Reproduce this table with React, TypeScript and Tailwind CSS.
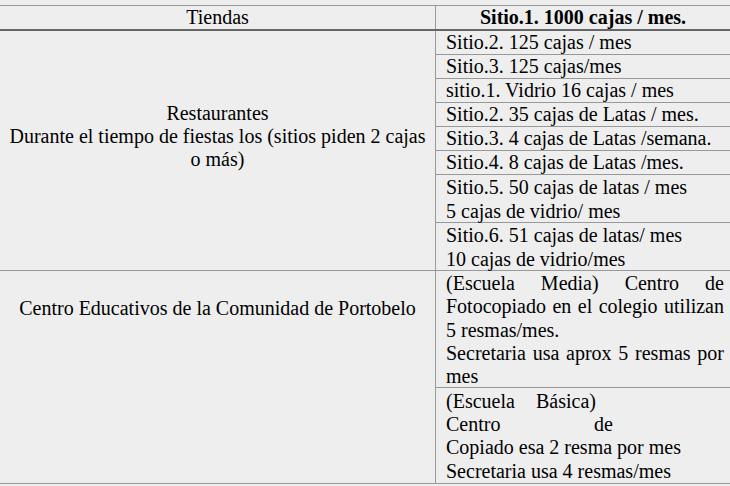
const restaurantes = [
  { lines: ['Sitio.2. 125 cajas / mes'], h: 'h-[23px]' },
  { lines: ['Sitio.3. 125 cajas/mes'], h: 'h-[23px]' },
  { lines: ['sitio.1. Vidrio 16 cajas / mes'], h: 'h-[23px]' },
  { lines: ['Sitio.2. 35 cajas de Latas / mes.'], h: 'h-[23px]' },
  { lines: ['Sitio.3. 4 cajas de Latas /semana.'], h: 'h-[23px]' },
  { lines: ['Sitio.4. 8 cajas de Latas /mes.'], h: 'h-[23px]' },
  { lines: ['Sitio.5. 50 cajas de latas / mes', '5 cajas de vidrio/ mes'], h: 'h-[47px] leading-[24px]' },
  { lines: ['Sitio.6. 51 cajas de latas/ mes', '10 cajas de vidrio/mes'], h: 'h-[47px] leading-[24px]' },
];

function Justified({ text, className = '' }: { text: string; className?: string }) {
  return <div className={`text-justify [text-align-last:justify] ${className}`}>{text}</div>;
}

export default function App() {
  return (
    <div
      className="w-[730px] h-[486px] bg-[#eeeeee] pt-[5px] text-[20px] leading-[23px] text-black overflow-hidden"
      style={{ fontFamily: '"Liberation Serif", "Times New Roman", serif' }}
    >
      <div className="border-t border-[#999999]">
        {/* header */}
        <div className="flex h-[25px] border-b-2 border-[#666666]">
          <div className="w-[435px] text-center">Tiendas</div>
          <div className="flex-1 border-l border-[#999999] text-center font-bold">
            Sitio.1. 1000 cajas / mes.
          </div>
        </div>

        {/* restaurantes */}
        <div className="flex border-b border-[#999999]">
          <div className="w-[435px] flex items-center justify-center text-center pb-[28px]">
            <div>
              <div>Restaurantes</div>
              <div className="whitespace-nowrap">Durante el tiempo de fiestas los (sitios piden 2 cajas</div>
              <div>o más)</div>
            </div>
          </div>
          <div className="flex-1 border-l border-[#999999]">
            {restaurantes.map((r, i) => (
              <div
                key={i}
                className={`${r.h} pl-[10px] pr-[6px] ${i < restaurantes.length - 1 ? 'border-b border-[#999999] box-content' : ''}`}
              >
                {r.lines.map((l) => (
                  <div key={l}>{l}</div>
                ))}
              </div>
            ))}
          </div>
        </div>

        {/* centros educativos */}
        <div className="flex border-b border-[#999999]">
          <div className="w-[435px] text-center pt-[26px]">
            Centro Educativos de la Comunidad de Portobelo
          </div>
          <div className="flex-1 border-l border-[#999999]">
            <div className="h-[117px] pt-[1px] pl-[10px] pr-[6px] leading-[23.3px] border-b border-[#999999] box-border">
              <Justified text="(Escuela Media) Centro de" />
              <Justified text="Fotocopiado en el colegio utilizan" />
              <div>5 resmas/mes.</div>
              <Justified text="Secretaria usa aprox 5 resmas por" />
              <div>mes</div>
            </div>
            <div className="h-[95px] pt-[2px] pl-[10px] pr-[6px] leading-[23.2px]">
              <Justified text="(Escuela Básica)" className="w-[150px]" />
              <Justified text="Centro de" className="w-[167px]" />
              <div>Copiado esa 2 resma por mes</div>
              <div>Secretaria usa 4 resmas/mes</div>
            </div>
          </div>
        </div>
      </div>
    </div>
  );
}
